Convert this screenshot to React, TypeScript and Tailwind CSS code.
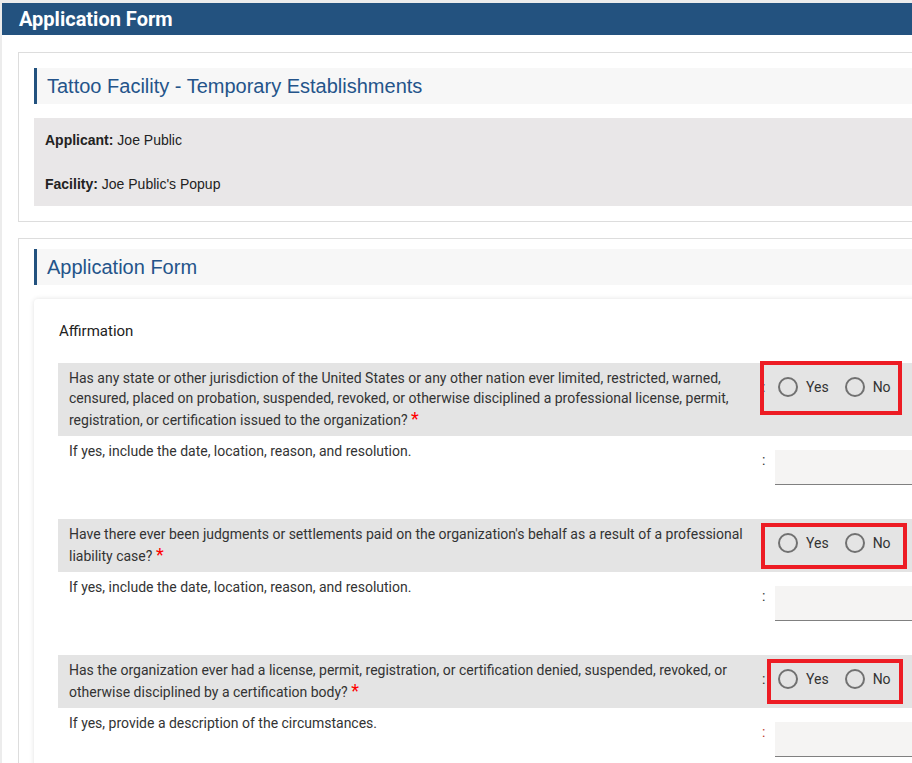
const questions = [
  {
    text: 'Has any state or other jurisdiction of the United States or any other nation ever limited, restricted, warned, censured, placed on probation, suspended, revoked, or otherwise disciplined a professional license, permit, registration, or certification issued to the organization?',
    sub: 'If yes, include the date, location, reason, and resolution.',
    box: 'left-[702px] top-[-2px] w-[142px] h-[54px]',
    subColonRed: false,
  },
  {
    text: "Have there ever been judgments or settlements paid on the organization's behalf as a result of a professional liability case?",
    sub: 'If yes, include the date, location, reason, and resolution.',
    box: 'left-[703px] top-[4px] w-[146px] h-[46px]',
    subColonRed: false,
  },
  {
    text: 'Has the organization ever had a license, permit, registration, or certification denied, suspended, revoked, or otherwise disciplined by a certification body?',
    sub: 'If yes, provide a description of the circumstances.',
    box: 'left-[709px] top-[4px] w-[136px] h-[45px]',
    subColonRed: true,
  },
];

function Radio({ label }: { label: string }) {
  return (
    <label className="flex items-center gap-[8px] h-[20px]">
      <span className="block w-[20px] h-[20px] rounded-full border-2 border-[#717171] bg-transparent" />
      <span className="text-[14px] leading-[20px] text-[#333]">{label}</span>
    </label>
  );
}

function Question({ q }: { q: (typeof questions)[number] }) {
  return (
    <div className="mb-[34px]">
      <div className="relative flex bg-[#e4e4e4]">
        <div className="w-[700px] shrink-0 pl-[11px] pr-[10px] pt-[5px] pb-[6px] text-[14px] leading-[20px] text-[#333]">
          {q.text} <span className="text-[18px] leading-[22px] text-[#ff0000]">*</span>
        </div>
        <div className="w-[17px] shrink-0 pl-[4px] pt-[14px] text-[14px] leading-[20px] text-[#333]">:</div>
        <div className="flex-1 pt-[14px] pl-[3px] flex gap-[16px]">
          <Radio label="Yes" />
          <Radio label="No" />
        </div>
        <div className={`absolute border-4 border-[#ed1c24] ${q.box}`} />
      </div>
      <div className="flex">
        <div className="w-[700px] shrink-0 pl-[11px] pr-[10px] pt-[5px] text-[14px] leading-[20px] text-[#333]">
          {q.sub}
        </div>
        <div
          className={`w-[17px] shrink-0 pl-[4px] pt-[14px] text-[14px] leading-[20px] ${q.subColonRed ? 'text-[#c0392b]' : 'text-[#333]'}`}
        >
          :
        </div>
        <div className="flex-1 pt-[14px]">
          <div className="h-[35px] bg-[#f5f4f3] border-b border-[#808080]" />
        </div>
      </div>
    </div>
  );
}

function SectionHeading({ title }: { title: string }) {
  return (
    <div className="h-[36px] flex items-center bg-[#f7f7f7] border-l-[3px] border-[#23527f] pl-[10px]">
      <h2 className="text-[20px] text-[#24548a] font-['Liberation_Sans',Arial,sans-serif]">{title}</h2>
    </div>
  );
}

export default function App() {
  return (
    <div className="w-[912px] h-[763px] overflow-hidden bg-white border-t-[3px] border-l-2 border-[#ececec] font-['Roboto',sans-serif]">
      <div className="w-[1200px]">
        <header className="h-[32px] bg-[#23527f] flex items-center pl-[17px]">
          <h1 className="text-[20px] font-bold text-white">Application Form</h1>
        </header>

        <main className="pt-[17px] px-[16px]">
          <section className="border border-[#dddddd] p-[15px]">
            <SectionHeading title="Tattoo Facility - Temporary Establishments" />
            <div className="mt-[14px] bg-[#e9e7e8] pl-[11px] pt-[12px] pb-[12px] flex flex-col gap-[24px] text-[14px] leading-[20px] text-[#222] font-['Liberation_Sans',Arial,sans-serif]">
              <p>
                <b>Applicant:</b> Joe Public
              </p>
              <p>
                <b>Facility:</b> Joe Public's Popup
              </p>
            </div>
          </section>

          <section className="mt-[16px] border border-[#dddddd] px-[15px] pt-[10px]">
            <SectionHeading title="Application Form" />
            <div className="mt-[14px] rounded-[4px] shadow-[0_0_5px_rgba(0,0,0,0.12)] px-[24px] pt-[22px] pb-[20px]">
              <p className="pl-[1px] text-[15px] leading-[20px] text-[#222]">Affirmation</p>
              <div className="mt-[22px]">
                {questions.map((q) => (
                  <Question key={q.text} q={q} />
                ))}
              </div>
            </div>
          </section>
        </main>
      </div>
    </div>
  );
}
